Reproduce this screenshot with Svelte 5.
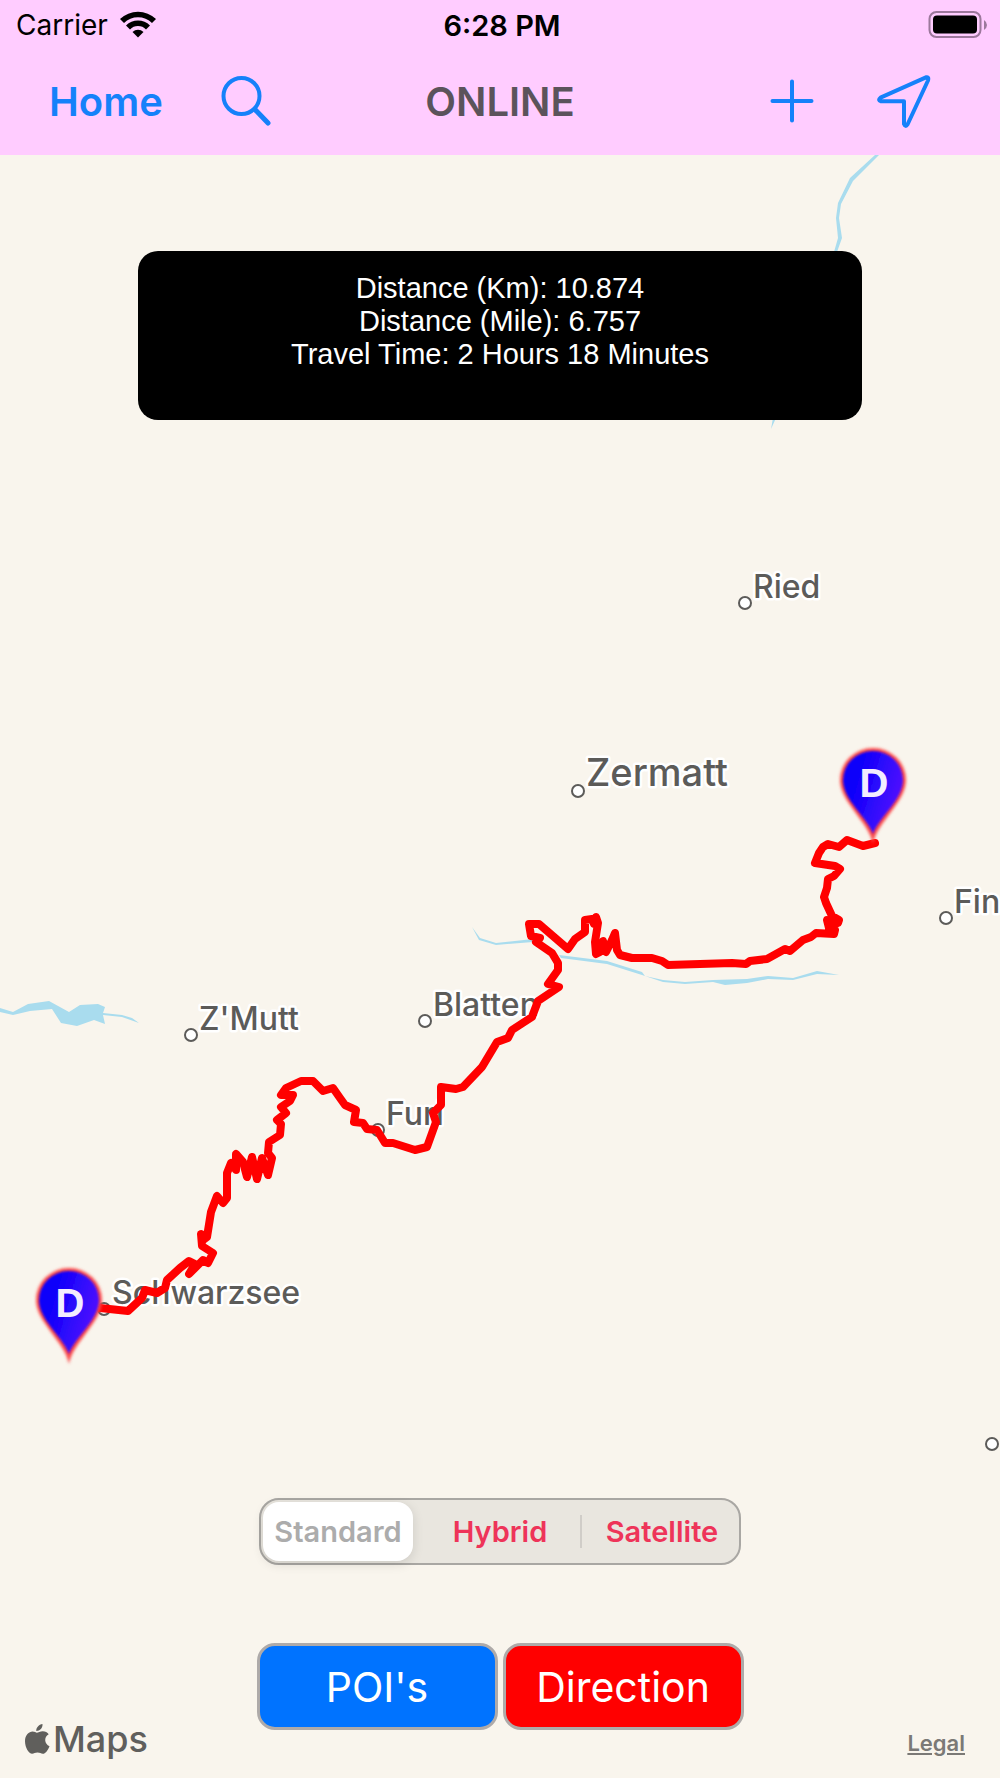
<script lang="ts">
  type Place = { name: string; dot: [number, number]; big?: boolean }

  let mapType = $state('Standard')

  const mapTypes = ['Standard', 'Hybrid', 'Satellite']

  const summary = [
    'Distance (Km): 10.874',
    'Distance (Mile): 6.757',
    'Travel Time: 2 Hours 18 Minutes'
  ]

  const places: Place[] = [
    { name: 'Ried', dot: [745, 603] },
    { name: 'Zermatt', dot: [578, 791], big: true },
    { name: 'Fin', dot: [946, 918] },
    { name: "Z'Mutt", dot: [191, 1035] },
    { name: 'Blatten', dot: [425, 1021] },
    { name: 'Furi', dot: [378, 1130] },
    { name: 'Schwarzsee', dot: [104, 1309] },
    { name: '', dot: [992, 1444] }
  ]

  const pins = [
    [873, 844],
    [69, 1364]
  ]

  const route =
    '875,843 863,846 847,840 839,847 828,844 823,847 819,853 815,863 835,866 840,869 834,876 828,879 ' +
    '827,888 824,897 826,903 832,916 839,920 838,923 827,920 829,928 835,930 834,934 816,933 811,937 ' +
    '803,940 790,951 785,949 767,959 750,961 746,964 732,963 700,964 668,965 662,961 652,958 632,958 ' +
    '620,955 617,950 615,933 612,940 606,952 603,941 600,952 596,954 595,942 598,923 596,917 594,924 ' +
    '592,919 585,920 585,932 575,939 568,949 539,924 529,924 531,936 540,938 536,942 552,953 558,963 ' +
    '558,970 548,984 559,987 538,1001 532,1017 512,1030 508,1038 497,1042 482,1067 463,1087 456,1089 ' +
    '441,1087 441,1105 433,1113 436,1122 427,1147 415,1150 393,1143 385,1143 377,1130 367,1129 ' +
    '363,1123 354,1122 356,1110 345,1105 340,1098 333,1088 323,1091 313,1081 301,1081 286,1088 ' +
    '281,1095 293,1095 290,1101 281,1107 286,1113 277,1120 281,1124 280,1135 269,1142 268,1153 ' +
    '272,1158 268,1175 262,1158 257,1179 252,1157 247,1177 243,1162 236,1154 236,1170 231,1163 ' +
    '227,1173 227,1198 223,1203 217,1196 211,1212 207,1237 203,1240 201,1234 202,1246 213,1253 ' +
    '208,1263 203,1260 189,1274 195,1264 189,1261 180,1268 167,1280 165,1288 157,1293 145,1290 ' +
    '142,1298 128,1311 100,1308'
</script>

<div class="app">
  <header>
    <div class="status">
      <div class="carrier">
        <span>Carrier</span>
        <svg aria-hidden="true" height="28" viewBox="0 0 38 28" width="38">
          <path d="M1 9A26 26 0 0 1 37 9L33 13A20 20 0 0 0 5 13Z"></path>
          <path d="M7 15.500A17 17 0 0 1 31 15.500L27 19.500A11 11 0 0 0 11 19.500Z"></path>
          <path d="M13.500 22A8 8 0 0 1 24.500 22L19 27.500Z"></path>
        </svg>
      </div>
      <span class="time">6:28 PM</span>
      <svg aria-hidden="true" class="battery" height="28" viewBox="0 0 60 28" width="60">
        <rect fill="none" height="25" rx="7" stroke="#9c789c" stroke-width="2" width="51" x="1.500" y="1"></rect>
        <rect height="18" rx="4" width="44" x="5" y="4.500"></rect>
        <path d="M56 9Q59 11 59 14Q59 17 56 19Z" fill="#9c789c"></path>
      </svg>
    </div>

    <nav>
      <div class="group">
        <button class="home" type="button">Home</button>
        <button aria-label="Search" type="button">
          <svg aria-hidden="true" height="52" viewBox="0 0 52 52" width="52">
            <circle cx="20.500" cy="21" r="18" stroke-width="4"></circle>
            <path d="M34 34.500L47 48" stroke-width="5"></path>
          </svg>
        </button>
      </div>
      <h1>ONLINE</h1>
      <div class="group right">
        <button aria-label="Add" type="button">
          <svg aria-hidden="true" height="44" viewBox="0 0 44 44" width="44">
            <path d="M22 2.500V41.500M2.500 22H41.500" stroke-width="4"></path>
          </svg>
        </button>
        <button aria-label="My location" type="button">
          <svg aria-hidden="true" height="54" viewBox="0 0 54 54" width="54">
            <path
              d="M49.500 3.200L3.500 23.700Q0.500 26.300 4 27.300H27V50Q28.500 53.500 30.500 50.500L51 6.500Q52 2.700 49.500 3.200Z"
              stroke-width="4"
            ></path>
          </svg>
        </button>
      </div>
    </nav>
  </header>

  <main>
    <svg aria-label="Route map" class="map" preserveAspectRatio="xMidYMid slice" role="img" viewBox="0 155 1000 1623">
      <defs>
        <linearGradient id="pin-fill" x1="0" x2="1" y1="0.200" y2="0.600">
          <stop offset="0.200" stop-color="#0a00fa"></stop>
          <stop offset="1" stop-color="#5512ff"></stop>
        </linearGradient>
        <filter height="140%" id="soft" width="140%" x="-20%" y="-20%">
          <feGaussianBlur stdDeviation="1.500"></feGaussianBlur>
        </filter>
        <filter height="140%" id="soft-body" width="140%" x="-20%" y="-20%">
          <feGaussianBlur stdDeviation="1"></feGaussianBlur>
        </filter>
      </defs>

      <g class="water">
        <path d="M875 155L850 178L838 203L836 218L838 238L834 252L837 252L842 238L839 218L841 204L853 181L879 155Z"></path>
        <path d="M773 418L771 429L776 418Z"></path>
        <path
          d="M0 1008L13 1012L28 1004L49 1001L69 1012L80 1005L98 1004L105 1007L103 1013L122 1015L132 1018L139 1023L122 1017L103 1015L105 1024L94 1020L77 1026L61 1023L52 1009L30 1011L13 1015L0 1012Z"
        ></path>
        <path d="M472 927L480 938L496 943L533 939V942L496 945L479 940Z"></path>
        <path
          d="M559 955L607 961L642 972L645 976L663 980L685 982L713 980L747 979L768 976L793 978L817 971L839 975L817 974L793 980L768 979L747 983L725 985L713 982L685 984L663 982L642 975L607 964L561 958Z"
        ></path>
      </g>

      {#each places as { name, dot, big }}
        <circle class="dot" cx={dot[0]} cy={dot[1]} r="6"></circle>
        <text class:big x={dot[0] + 8} y={dot[1] - 5}>{name}</text>
      {/each}

      <polyline class="route" points={route}></polyline>

      {#each pins as [x, y]}
        <g transform="translate({x} {y})">
          <path
            class="pin-edge"
            d="M0 0C-4 -22 -33 -42 -33 -64A33 32 0 0 1 33 -64C33 -42 4 -22 0 0Z"
            filter="url(#soft)"
          ></path>
          <path
            class="pin-body"
            d="M0 -10C-6 -27 -30 -44 -30 -64A30 29 0 0 1 30 -64C30 -44 6 -27 0 -10Z"
            filter="url(#soft-body)"
          ></path>
          <text class="pin-letter" x="1" y="-47">D</text>
        </g>
      {/each}
    </svg>

    <section class="summary">
      {#each summary as line}
        <p>{line}</p>
      {/each}
    </section>

    <fieldset class="segments">
      {#each mapTypes as type}
        <label class:active={mapType === type}>
          <input bind:group={mapType} name="map-type" type="radio" value={type} />
          {type}
        </label>
      {/each}
    </fieldset>

    <footer>
      <span class="maps">
        <svg aria-hidden="true" height="32" viewBox="0 0 26 32" width="26">
          <path
            d="M18.500 1C18.800 5 16 8 12.300 8C12 4.500 15 1.500 18.500 1ZM12.800 9.700C14.200 9.700 16 8.300 18.800 8.300C21.200 8.300 23.500 9.500 24.700 11.300C19.500 14.300 20.400 21.200 25.500 23.200C24.300 26.500 21.800 30.800 18.900 30.800C16.900 30.800 16 29.600 13.500 29.600C11 29.600 10 30.800 8.100 30.800C4.900 30.800 1 24.500 1 18.200C1 12 5 8.500 8.600 8.500C10.600 8.500 12 9.700 12.800 9.700Z"
          ></path>
        </svg>Maps
      </span>
      <div class="actions">
        <button class="pois" type="button">POI's</button>
        <button class="direction" type="button">Direction</button>
      </div>
      <a href="#legal">Legal</a>
    </footer>
  </main>
</div>

<style>
  :global(body) {
    margin: 0;
  }

  .app {
    min-height: 100vh;
    display: flex;
    flex-direction: column;
    font-family: Inter, 'Liberation Sans', sans-serif;
    background: #f9f5ed;
  }

  button {
    font: inherit;
    border: none;
    padding: 0;
    background: none;
    cursor: pointer;
  }

  header {
    background: #ffccff;
  }

  .status {
    height: 50px;
    padding: 0 12px 0 16px;
    display: grid;
    grid-template-columns: 1fr auto 1fr;
    align-items: center;
    font-size: 28px;
  }

  .carrier {
    display: flex;
    align-items: center;
    gap: 11px;
  }

  .carrier svg {
    margin-bottom: 3px;
  }

  .time {
    font-size: 29px;
    font-weight: 600;
  }

  .battery {
    justify-self: end;
  }

  nav {
    box-sizing: border-box;
    height: 105px;
    padding: 0 49px 3px;
    display: grid;
    grid-template-columns: 1fr auto 1fr;
    align-items: center;
    font-size: 40px;
  }

  .group {
    display: flex;
    align-items: center;
    gap: 58px;
    color: #1581fa;
  }

  .group.right {
    justify-content: flex-end;
    gap: 63px;
    padding-right: 20px;
  }

  .group button {
    color: inherit;
    display: flex;
  }

  .group svg {
    fill: none;
    stroke: currentColor;
    stroke-linecap: round;
    stroke-linejoin: round;
  }

  .home {
    font-weight: 600;
  }

  h1 {
    margin: 0;
    font-size: 40px;
    font-weight: 600;
    color: #5b535b;
  }

  main {
    flex: 1;
    position: relative;
    display: flex;
    flex-direction: column;
    padding: 96px 24px 17px;
    overflow: hidden;
  }

  main > :not(.map) {
    position: relative;
  }

  .map {
    position: absolute;
    inset: 0;
    width: 100%;
    height: 100%;
  }

  .water {
    fill: #a9dcee;
  }

  .dot {
    fill: #fff;
    stroke: #5c5b59;
    stroke-width: 2px;
  }

  .map text {
    font-size: 32px;
    font-weight: 500;
    fill: #5c5b59;
    stroke: #fff;
    stroke-width: 5px;
    stroke-linejoin: round;
    paint-order: stroke;
  }

  .map text.big {
    font-size: 38px;
  }

  .route {
    fill: none;
    stroke: #ff0000;
    stroke-width: 8px;
    stroke-linecap: round;
    stroke-linejoin: round;
  }

  .pin-edge {
    fill: #fb4a4a;
  }

  .pin-body {
    fill: url(#pin-fill);
  }

  .map text.pin-letter {
    font-family: 'Liberation Sans', sans-serif;
    font-size: 40px;
    font-weight: 700;
    text-anchor: middle;
    fill: #f3edff;
    stroke: none;
  }

  .summary {
    margin: 0 114px;
    padding: 21px 20px 49px;
    border-radius: 20px;
    background: #000;
    color: #fff;
    font-family: 'Liberation Sans', sans-serif;
    font-size: 29px;
    line-height: 33px;
    text-align: center;
  }

  .summary p {
    margin: 0;
  }

  .segments {
    align-self: center;
    box-sizing: border-box;
    width: 482px;
    margin: auto 0 78px;
    padding: 2px;
    border: 2px solid #a9a7a3;
    border-radius: 20px;
    background: #e9e6df;
    display: grid;
    grid-template-columns: repeat(3, 1fr);
    gap: 12px;
  }

  .segments label {
    position: relative;
    border-radius: 16px;
    color: #ee3459;
    font-size: 29px;
    font-weight: 600;
    line-height: 59px;
    text-align: center;
    cursor: pointer;
  }

  .segments label.active {
    background: #fff;
    color: #acacac;
    box-shadow: 0 3px 12px rgba(0, 0, 0, 0.12);
  }

  .segments label:not(.active) + label:not(.active)::before {
    content: '';
    position: absolute;
    left: -7px;
    top: 13px;
    bottom: 13px;
    width: 2px;
    background: #d0cdc8;
  }

  .segments input {
    position: absolute;
    opacity: 0;
    margin: 0;
  }

  footer {
    display: grid;
    grid-template-columns: 1fr auto 1fr;
    align-items: end;
  }

  .maps {
    display: flex;
    align-items: center;
    gap: 3px;
    color: #605f5c;
    font-size: 36px;
    font-weight: 500;
    line-height: 44px;
  }

  .maps svg {
    fill: currentColor;
  }

  .actions {
    display: flex;
    gap: 5px;
    margin-bottom: 31px;
  }

  .actions button {
    box-sizing: border-box;
    width: 241px;
    height: 87px;
    border: 3px solid #aeaaa9;
    border-radius: 18px;
    color: #fff;
    font-size: 41px;
  }

  .pois {
    background: #0073ff;
  }

  .direction {
    background: #ff0000;
  }

  footer a {
    justify-self: end;
    margin-right: 11px;
    color: #7b7976;
    font-size: 22px;
    font-weight: 600;
    line-height: 36px;
  }
</style>
